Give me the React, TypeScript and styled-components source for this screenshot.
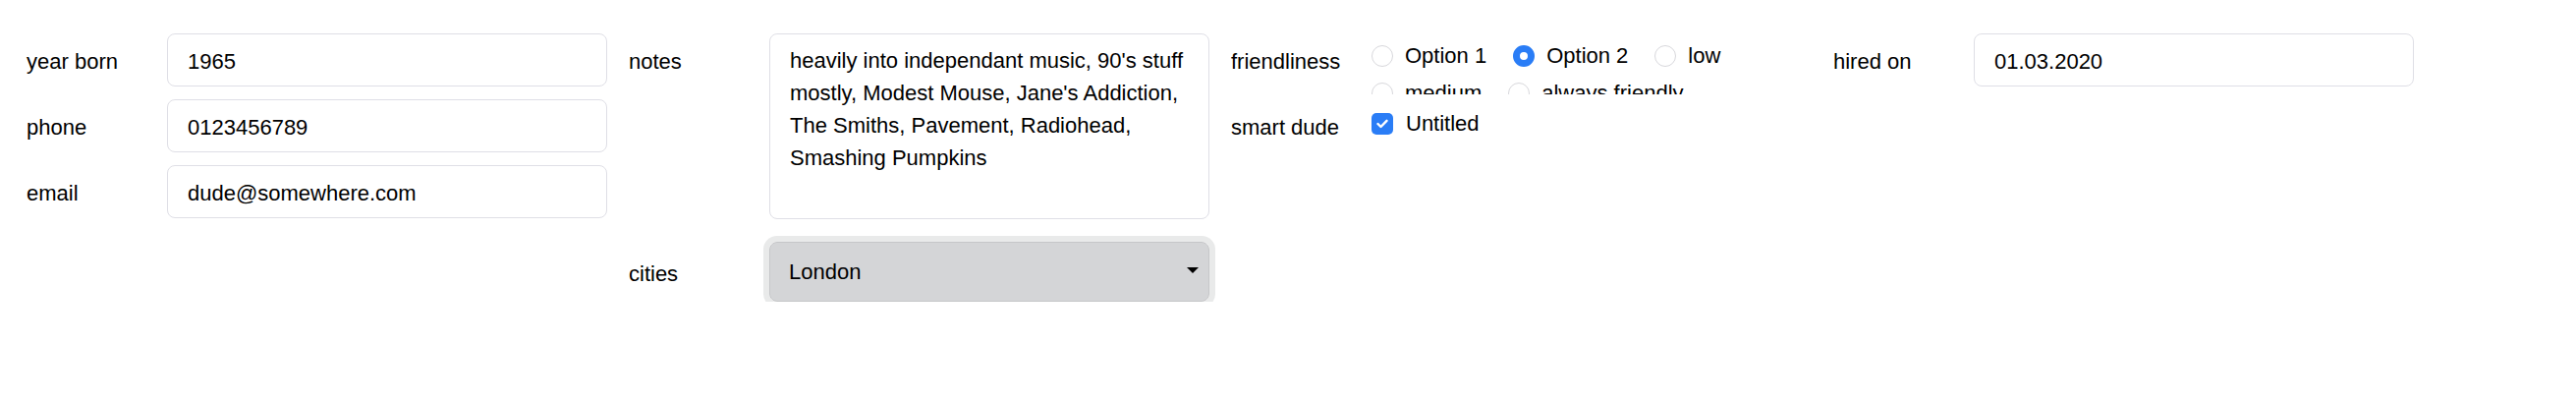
import styled, { createGlobalStyle } from 'styled-components'

const GlobalStyle = createGlobalStyle`
  body {
    margin: 0;
    background: #fff;
    color: #000;
    font-family: "Liberation Sans", Arial, Helvetica, sans-serif;
  }
`

const Form = styled.div`
  display: grid;
  grid-template-columns: repeat(4, 613px);
  align-items: start;
  padding: 34px 0 0 27px;
  font-size: 22px;
`

const Column = styled.div<{ $gap: number }>`
  display: flex;
  flex-direction: column;
  gap: ${p => p.$gap}px;
`

const Row = styled.div<{ $center?: boolean }>`
  display: grid;
  grid-template-columns: 143px 448px;
  align-items: ${p => (p.$center ? 'center' : 'start')};
`

const Label = styled.label`
  padding-top: 3px;
  line-height: 51px;
  white-space: nowrap;
`

const TextInput = styled.input`
  box-sizing: border-box;
  width: 448px;
  height: 54px;
  margin: 0;
  padding: 3px 20px 0;
  border: 1px solid #dfdfe6;
  border-radius: 8px;
  background: #fff;
  font: inherit;
  color: inherit;
  outline: none;
`

const Notes = styled.textarea`
  box-sizing: border-box;
  display: block;
  width: 448px;
  height: 189px;
  margin: 0;
  padding: 10px 20px 8px;
  border: 1px solid #dfdfe6;
  border-radius: 8px;
  font: inherit;
  line-height: 33px;
  color: inherit;
  resize: none;
  overflow: hidden;
  outline: none;
`

const SelectWrap = styled.div`
  position: relative;
  width: 448px;
  border-radius: 8px;
  box-shadow: 0 0 0 6px #e9eaea;

  &::after {
    content: '';
    position: absolute;
    right: 11px;
    top: 26px;
    border-left: 6px solid transparent;
    border-right: 6px solid transparent;
    border-top: 6px solid #000;
    pointer-events: none;
  }
`

const Select = styled.select`
  appearance: none;
  box-sizing: border-box;
  display: block;
  width: 100%;
  height: 61px;
  margin: 0;
  padding: 0 40px 0 19px;
  border: 1px solid #c6c7c9;
  border-radius: 8px;
  background: #d4d5d7;
  font: inherit;
  color: inherit;
  outline: none;
`

const RadioGroup = styled.div`
  box-sizing: border-box;
  display: flex;
  flex-wrap: wrap;
  align-content: flex-start;
  row-gap: 5px;
  width: 448px;
  height: 62px;
  padding-top: 6px;
  overflow: hidden;
`

const Choice = styled.label`
  display: inline-flex;
  align-items: center;
  gap: 12px;
  margin-right: 27px;
  line-height: 33px;
  white-space: nowrap;
`

const Radio = styled.input.attrs({ type: 'radio' })`
  appearance: none;
  box-sizing: border-box;
  width: 22px;
  height: 22px;
  margin: 0;
  border: 1px solid #d8d8dc;
  border-radius: 50%;
  background: #fff;

  &:checked {
    border: 7px solid #2a7df6;
  }
`

const CheckRow = styled.label`
  display: flex;
  align-items: center;
  gap: 13px;
  padding-top: 8px;
  line-height: 33px;
`

const CheckBox = styled.span`
  display: inline-flex;
  align-items: center;
  justify-content: center;
  width: 22px;
  height: 22px;
  border-radius: 5px;
  background: #2a7df6;
`

const friendliness = ['Option 1', 'Option 2', 'low', 'medium', 'always friendly']

export default function App () {
  return (
    <>
      <GlobalStyle />
      <Form>
        <Column $gap={13}>
          <Row>
            <Label>year born</Label>
            <TextInput defaultValue="1965" />
          </Row>
          <Row>
            <Label>phone</Label>
            <TextInput defaultValue="0123456789" />
          </Row>
          <Row>
            <Label>email</Label>
            <TextInput defaultValue="dude@somewhere.com" />
          </Row>
        </Column>

        <Column $gap={23}>
          <Row>
            <Label>notes</Label>
            <Notes defaultValue="heavily into independant music, 90's stuff mostly, Modest Mouse, Jane's Addiction, The Smiths, Pavement, Radiohead, Smashing Pumpkins" />
          </Row>
          <Row $center>
            <Label>cities</Label>
            <SelectWrap>
              <Select defaultValue="London">
                <option>London</option>
                <option>Paris</option>
                <option>Berlin</option>
                <option>New York</option>
              </Select>
            </SelectWrap>
          </Row>
        </Column>

        <Column $gap={5}>
          <Row>
            <Label>friendliness</Label>
            <RadioGroup>
              {friendliness.map((opt) => (
                <Choice key={opt}>
                  <Radio name="friendliness" defaultChecked={opt === 'Option 2'} />
                  {opt}
                </Choice>
              ))}
            </RadioGroup>
          </Row>
          <Row>
            <Label>smart dude</Label>
            <CheckRow>
              <CheckBox>
                <svg width="12" height="10" viewBox="0 0 12 10">
                  <polyline points="1.5,5 4.5,8 10.5,1.8" fill="none" stroke="#fff" strokeWidth="2.4" strokeLinecap="round" strokeLinejoin="round" />
                </svg>
              </CheckBox>
              Untitled
            </CheckRow>
          </Row>
        </Column>

        <Column $gap={13}>
          <Row>
            <Label>hired on</Label>
            <TextInput defaultValue="01.03.2020" />
          </Row>
        </Column>
      </Form>
    </>
  )
}
